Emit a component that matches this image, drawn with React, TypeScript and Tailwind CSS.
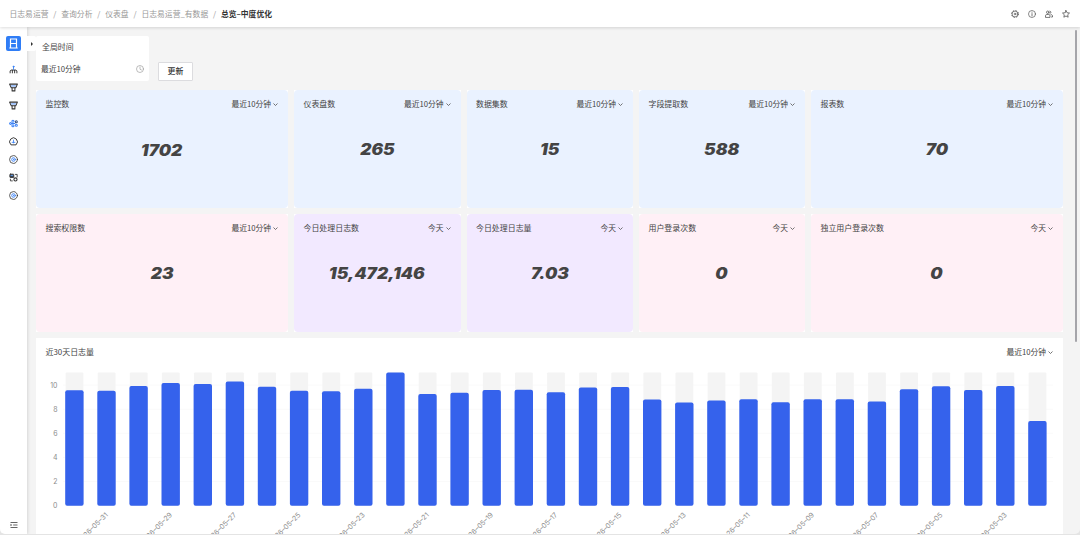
import type { ReactNode } from 'react';
import clsx from 'clsx';

interface Stat {
  title: string;
  value: string;
  range: string;
  tone: 'blue' | 'pink' | 'purple';
  low?: boolean;
}

const crumbs = ['日志易运营', '查询分析', '仪表盘', '日志易运营_有数据'];

const stats: Stat[] = [
  { title: '监控数', value: '1702', range: '最近10分钟', tone: 'blue', low: true },
  { title: '仪表盘数', value: '265', range: '最近10分钟', tone: 'blue' },
  { title: '数据集数', value: '15', range: '最近10分钟', tone: 'blue' },
  { title: '字段提取数', value: '588', range: '最近10分钟', tone: 'blue' },
  { title: '报表数', value: '70', range: '最近10分钟', tone: 'blue' },
  { title: '搜索权限数', value: '23', range: '最近10分钟', tone: 'pink' },
  { title: '今日处理日志数', value: '15,472,146', range: '今天', tone: 'purple' },
  { title: '今日处理日志量', value: '7.03', range: '今天', tone: 'purple' },
  { title: '用户登录次数', value: '0', range: '今天', tone: 'pink' },
  { title: '独立用户登录次数', value: '0', range: '今天', tone: 'pink' },
];

const tones = {
  blue: 'bg-[#eaf2ff]',
  pink: 'bg-[#fff0f6]',
  purple: 'bg-[#f2e9ff]',
};

const volumes = [
  9.58, 9.54, 9.92, 10.18, 10.1, 10.3, 9.86, 9.53, 9.48, 9.7, 11.04, 9.26, 9.36, 9.6, 9.62, 9.4, 9.8,
  9.85, 8.8, 8.56, 8.73, 8.83, 8.58, 8.82, 8.83, 8.63, 9.65, 9.9, 9.6, 9.92, 7.02,
];

const UNIT = 12.06;
const BASE = 133.7;
const PITCH = 32.1;

const Svg = ({ children, className }: { children: ReactNode; className?: string }) => (
  <svg
    viewBox="0 0 16 16"
    fill="none"
    stroke="currentColor"
    strokeWidth="1.5"
    strokeLinecap="round"
    strokeLinejoin="round"
    className={clsx('shrink-0', className)}
  >
    {children}
  </svg>
);

const Filter = () => (
  <>
    <path d="M1 2h14l-3 6.5H4z" strokeWidth="1.8" />
    <path d="M4.5 5.2h7" stroke="#3b82f6" strokeWidth="1.6" />
    <path d="M5.5 9v5h5V9" strokeWidth="1.8" />
  </>
);

const Target = () => (
  <>
    <circle cx="8" cy="8" r="7" strokeWidth="1.4" />
    <circle cx="8" cy="8" r="3.2" stroke="#3b82f6" strokeWidth="1.6" />
    <path d="M8 7.5v1" stroke="#3b82f6" />
  </>
);

const navIcons: ReactNode[] = [
  <>
    <path d="M2 14v-3.5L3.5 9h9l1.5 1.5V14M6 9.5V14M10 9.5V14" strokeWidth="1.7" />
    <path d="M8 8V3" stroke="#3b82f6" />
    <circle cx="8" cy="3" r="1" fill="#3b82f6" stroke="#3b82f6" />
  </>,
  <Filter />,
  <Filter />,
  <>
    <g stroke="#3b82f6" strokeWidth="1.8">
      <circle cx="2.8" cy="8" r="1.7" />
      <circle cx="7" cy="4" r="1.9" />
      <circle cx="7" cy="12" r="1.9" />
      <path d="M5 8h5.5" />
      <circle cx="13" cy="11" r="1.8" />
    </g>
    <circle cx="13" cy="5" r="1.8" stroke="#334e7c" strokeWidth="1.8" />
  </>,
  <>
    <path d="M3 13.5A7 7 0 1 1 13 13.5z" strokeWidth="1.7" />
    <path d="M8 5.5v5M5.5 9.5h5" stroke="#3b82f6" />
  </>,
  <Target />,
  <>
    <rect x="1.5" y="2" width="7" height="6" rx="1" fill="#374151" />
    <path d="M11.5 2.5h3V7M2.5 11v3H6" />
    <path d="M3.5 4.5h3" stroke="#60a5fa" />
    <circle cx="11.5" cy="11.5" r="2.8" strokeWidth="1.9" />
  </>,
  <Target />,
];

const Chevron = () => (
  <svg viewBox="0 0 8 8" className="ml-[2px] size-[5px]" fill="none" stroke="#555" strokeWidth="1.3">
    <path d="M.8 2.4 4 5.6l3.2-3.2" />
  </svg>
);

const CardHeader = ({ title, range }: { title: string; range: string }) => (
  <div className="flex h-3 items-center justify-between pr-[10px] pl-[9.5px] text-[7.95px] text-[#444]">
    <span>{title}</span>
    <span className="flex items-center text-[7.75px]">
      {range}
      <Chevron />
    </span>
  </div>
);

const StatCard = ({ stat }: { stat: Stat }) => (
  <div className="bg-white">
    <div className={clsx('h-full rounded-[4px] pt-[8px]', tones[stat.tone])}>
      <CardHeader title={stat.title} range={stat.range} />
      <div className={clsx('flex justify-center', stat.low ? 'pt-[31px]' : 'pt-[30px]')}>
        <span className="scale-x-[1.12] font-['Inter'] text-[15.5px] leading-[20px] font-black text-[#444] italic">
          {stat.value}
        </span>
      </div>
    </div>
  </div>
);

const VolumeChart = () => (
  <svg width="1027" height="162" className="block" fontFamily="Inter, sans-serif">
    {[2, 4, 6, 8, 10].map((tick) => (
      <line key={tick} x1="27" x2="1017" y1={BASE - tick * UNIT} y2={BASE - tick * UNIT} stroke="#fafafa" />
    ))}
    {[0, 2, 4, 6, 8, 10].map((tick) => (
      <text key={tick} x="21.5" y={BASE - tick * UNIT + 2.6} fontSize="7" fill="#8c8c8c" textAnchor="end">
        {tick}
      </text>
    ))}
    {volumes.map((v, i) => {
      const x = 29.2 + i * PITCH;
      return (
        <g key={i}>
          <rect x={x + 0.4} y="0.6" width="17.8" height={BASE - 0.6} rx="1" fill="#f4f4f4" />
          <rect x={x} y={BASE - v * UNIT} width="18.4" height={v * UNIT} rx="2" fill="#3562ec" />
        </g>
      );
    })}
    {volumes.map((_, i) => {
      if (i % 2 === 0) return null;
      const x = 72.4 + (i - 1) * PITCH;
      return (
        <text
          key={i}
          transform={`translate(${x} 143.4) rotate(-45)`}
          fontSize="7"
          fill="#8c8c8c"
          textAnchor="end"
        >
          {`2026–05–${String(32 - i).padStart(2, '0')}`}
        </text>
      );
    })}
  </svg>
);

const Header = () => (
  <header className="relative z-10 flex h-[27px] shrink-0 items-center justify-between bg-white pr-[10px] pl-[9.5px] shadow-[0_1px_3px_rgba(0,0,0,0.14)]">
    <nav className="flex items-center text-[7.8px] text-[#999]">
      {crumbs.map((crumb) => (
        <span key={crumb} className="flex">
          {crumb}
          <span className="w-[12.8px] text-center">/</span>
        </span>
      ))}
      <span className="font-bold text-[#333]">总览–中度优化</span>
    </nav>
    <div className="flex items-center gap-[9px] text-[#4b4b4b]">
      <Svg className="size-2">
        <circle cx="8" cy="8" r="5.9" strokeWidth="1.4" />
        <circle cx="8" cy="8" r="7.1" strokeWidth="1.4" strokeDasharray="2.8 2.78" strokeLinecap="butt" />
        <circle cx="8" cy="8" r="1.7" strokeWidth="1.3" />
      </Svg>
      <Svg className="size-2">
        <circle cx="8" cy="8" r="7" strokeWidth="1.3" />
        <path d="M8 7.2v4.5M8 4.3v.2" />
      </Svg>
      <Svg className="size-2">
        <circle cx="5.5" cy="4.5" r="2.5" />
        <path d="M1 14v-2.5c0-1.5 1-2.5 2.5-2.5h4C9 9 10 10 10 11.5V14zM10 2.2a2.5 2.5 0 0 1 0 4.8M12 9c2 .3 3 1.5 3 3v2h-2" />
      </Svg>
      <Svg className="size-2">
        <path d="m8 1 2.1 4.5 4.9.6-3.6 3.4.9 4.9L8 12l-4.3 2.4.9-4.9L1 6.1l4.9-.6z" />
      </Svg>
    </div>
  </header>
);

const Sidebar = () => (
  <aside className="flex w-[27px] shrink-0 flex-col items-center bg-white pt-[9px] shadow-[1px_0_3px_rgba(0,0,0,0.12)]">
    <div className="flex size-[15px] items-center justify-center rounded-[2px] bg-[#2f7df6] text-white">
      <svg viewBox="0 0 9 11" className="h-[11px] w-[9px]" fill="none" stroke="currentColor" strokeWidth="1.2">
        <path d="M1.5 1h6v9h-6zM1.5 5.5h6M.3 10h8.4" />
      </svg>
    </div>
    <div className="mt-[14px] flex flex-col gap-[9px] text-[#333]">
      {navIcons.map((icon, i) => (
        <Svg key={i} className="size-[9px]">
          {icon}
        </Svg>
      ))}
    </div>
    <svg viewBox="0 0 8 8" className="mt-auto mb-[5px] size-2 text-[#555]" fill="none" stroke="currentColor" strokeWidth=".9">
      <path d="M.5 1.5h7M3.2 4h4.3M.5 6.5h7" />
      <path d="M.5 2.7v2.6L2.2 4z" fill="currentColor" stroke="none" />
    </svg>
  </aside>
);

export default function App() {
  return (
    <div className="h-[535px] w-[1080px] overflow-hidden bg-[#e4e4e4] pb-[1px] font-['Noto_Sans_CJK_SC',sans-serif] leading-none">
      <div className="flex h-full flex-col overflow-hidden rounded-b-[5px] bg-[#f4f4f4]">
        <Header />
        <div className="flex min-h-0 flex-1">
          <Sidebar />
          <div className="mt-[9px] flex h-[15px] w-[9px] shrink-0 items-center justify-center rounded-r-[2px] bg-white">
            <div className="h-0 w-0 border-y-[2px] border-l-[2.5px] border-y-transparent border-l-[#333]" />
          </div>
          <main className="min-w-0 flex-1 overflow-hidden pt-[9px]">
            <div className="flex h-[45px] items-end">
              <div className="flex h-full w-[113px] flex-col rounded-[2px] bg-white pr-[5px] pl-[5px] text-[7.9px] text-[#444]">
                <span className="pt-[7px] pl-px">全局时间</span>
                <div className="mt-[14px] flex items-center justify-between">
                  <span className="text-[7.75px]">最近10分钟</span>
                  <Svg className="size-[8px] text-[#999]">
                    <circle cx="8" cy="8" r="7" strokeWidth="1.3" />
                    <path d="M8 4v4.5l3 1.5" strokeWidth="1.3" />
                  </Svg>
                </div>
              </div>
              <button className="ml-[9px] h-[19px] w-[35px] rounded-[1px] border border-[#dcdcdf] bg-white pb-px text-[7.9px] font-medium text-[#333]">
                更新
              </button>
            </div>
            <div className="mt-[9px] grid w-[1027px] grid-cols-[252px_166.5px_166.5px_166px_252px] grid-rows-[118px_118px] gap-[6px]">
              {stats.map((stat) => (
                <StatCard key={stat.title} stat={stat} />
              ))}
            </div>
            <section className="mt-[6px] h-[200px] w-[1027px] bg-white pt-[8px]">
              <CardHeader title="近30天日志量" range="最近10分钟" />
              <div className="mt-[14px]">
                <VolumeChart />
              </div>
            </section>
          </main>
          <div className="mt-[3px] mr-[3px] h-[312px] w-[2px] shrink-0 rounded-full bg-[#a5a5aa]" />
        </div>
      </div>
    </div>
  );
}
